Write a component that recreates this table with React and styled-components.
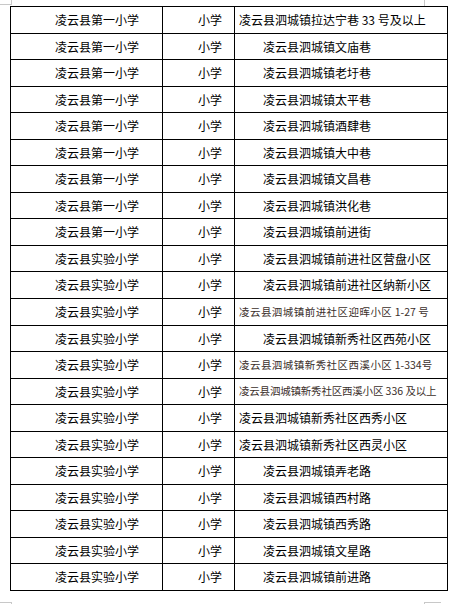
import React from 'react';
import styled, {createGlobalStyle} from 'styled-components';

const GlobalStyle = createGlobalStyle`
  html, body {
    margin: 0;
    padding: 0;
    background: #ffffff;
  }
  body {
    font-family: "Noto Sans CJK SC", "Noto Sans", sans-serif;
  }
`;

const Page = styled.div`
  position: relative;
  width: 463px;
  height: 604px;
  overflow: hidden;
  background: #ffffff;
  padding: 6px 0 0 10px;
  box-sizing: border-box;
`;

// Word page-margin corner marks
const Mark = styled.div`
  position: absolute;
  background: #c8c8c8;
  left: ${p => p.x}px;
  top: ${p => p.y}px;
  width: ${p => p.w}px;
  height: ${p => p.h}px;
`;

const Table = styled.div`
  width: 438px;
  border-top: 1px solid #000;
  border-left: 1px solid #000;
  box-sizing: border-box;
`;

const Row = styled.div`
  display: grid;
  grid-template-columns: 152px 72px 213px;
  height: ${p => p.h}px;
`;

const Cell = styled.div`
  border-right: 1px solid #000;
  border-bottom: 1px solid #000;
  display: flex;
  align-items: center;
  white-space: pre;
  overflow: hidden;
  font-size: 12px;
  line-height: 1;
  color: #000;
`;

const School = styled(Cell)`
  padding-left: 44px;
`;

const Level = styled(Cell)`
  padding-left: 35px;
`;

const Area = styled(Cell)`
  padding-left: ${p => (p.indent ? 28 : 4)}px;
  ${p => p.small && `
    font-size: 10.5px;
    color: #3b2f2b;
  `}
  letter-spacing: ${p => (p.small ? p.small : 0)}px;
`;

const Num = styled.span`
  letter-spacing: 0;
`;

const first = '凌云县第一小学';
const exp = '凌云县实验小学';
const town = '凌云县泗城镇';

const rows = [
  {s: first, a: town + '拉达宁巷 33 号及以上'},
  {s: first, a: town + '文庙巷', indent: true},
  {s: first, a: town + '老圩巷', indent: true},
  {s: first, a: town + '太平巷', indent: true},
  {s: first, a: town + '酒肆巷', indent: true},
  {s: first, a: town + '大中巷', indent: true},
  {s: first, a: town + '文昌巷', indent: true},
  {s: first, a: town + '洪化巷', indent: true},
  {s: first, a: town + '前进街', indent: true},
  {s: exp, a: town + '前进社区营盘小区', indent: true},
  {s: exp, a: town + '前进社区纳新小区', indent: true},
  {s: exp, a: [town + '前进社区迎晖小区', ' 1-27 ', '号'], small: 0.45},
  {s: exp, a: town + '新秀社区西苑小区', indent: true},
  {s: exp, a: [town + '新秀社区西溪小区', ' 1-334', '号'], small: 0.45},
  {s: exp, a: [town + '新秀社区西溪小区', ' 336 ', '及以上'], small: -0.2},
  {s: exp, a: town + '新秀社区西秀小区'},
  {s: exp, a: town + '新秀社区西灵小区'},
  {s: exp, a: town + '弄老路', indent: true},
  {s: exp, a: town + '西村路', indent: true},
  {s: exp, a: town + '西秀路', indent: true},
  {s: exp, a: town + '文星路', indent: true},
  {s: exp, a: town + '前进路', indent: true},
];

const pitch = 584 / rows.length;
const rowHeight = i => Math.round((i + 1) * pitch) - Math.round(i * pitch);

const AreaText = ({a}) =>
  Array.isArray(a) ? (
    <span>
      {a[0]}
      <Num>{a[1]}</Num>
      {a[2]}
    </span>
  ) : (
    a
  );

export default function App() {
  return (
    <Page>
      <GlobalStyle />
      <Mark x={0} y={4} w={11} h={1} />
      <Mark x={11} y={0} w={1} h={5} />
      <Mark x={424} y={0} w={1} h={6} />
      <Mark x={0} y={602} w={11} h={1} />
      <Mark x={11} y={602} w={1} h={2} />
      <Mark x={424} y={602} w={17} h={1} />
      <Mark x={424} y={602} w={1} h={2} />
      <Table>
        {rows.map((r, i) => (
          <Row key={i} h={rowHeight(i)}>
            <School>{r.s}</School>
            <Level>小学</Level>
            <Area indent={r.indent} small={r.small}>
              <AreaText a={r.a} />
            </Area>
          </Row>
        ))}
      </Table>
    </Page>
  );
}
